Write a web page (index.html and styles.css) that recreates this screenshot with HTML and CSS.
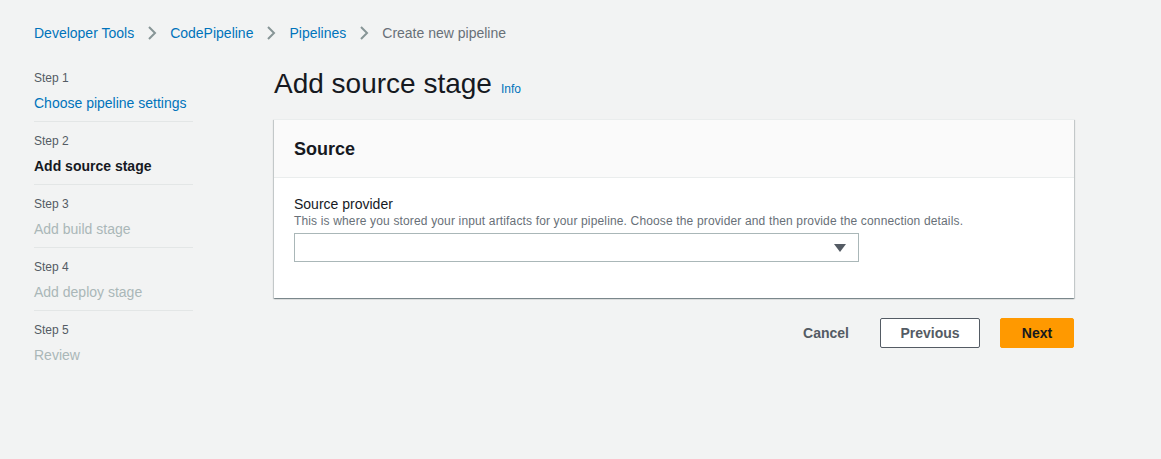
FILE: index.html
```html
<!DOCTYPE html>
<html>
<head>
<meta charset="utf-8">
<link rel="stylesheet" href="styles.css">
</head>
<body>
<nav class="crumbs">
  <a class="crumb-link">Developer Tools</a>
  <svg class="chev" viewBox="0 0 10 16" width="10" height="16"><path d="M2 2l6 6-6 6" fill="none" stroke="#879596" stroke-width="2"/></svg>
  <a class="crumb-link">CodePipeline</a>
  <svg class="chev" viewBox="0 0 10 16" width="10" height="16"><path d="M2 2l6 6-6 6" fill="none" stroke="#879596" stroke-width="2"/></svg>
  <a class="crumb-link">Pipelines</a>
  <svg class="chev" viewBox="0 0 10 16" width="10" height="16"><path d="M2 2l6 6-6 6" fill="none" stroke="#879596" stroke-width="2"/></svg>
  <span class="crumb-current">Create new pipeline</span>
</nav>
<div class="layout">
  <aside class="steps">
    <div class="step"><div class="step-num">Step 1</div><div class="step-title link">Choose pipeline settings</div></div>
    <div class="step"><div class="step-num">Step 2</div><div class="step-title active">Add source stage</div></div>
    <div class="step"><div class="step-num">Step 3</div><div class="step-title disabled">Add build stage</div></div>
    <div class="step"><div class="step-num">Step 4</div><div class="step-title disabled">Add deploy stage</div></div>
    <div class="step last"><div class="step-num">Step 5</div><div class="step-title disabled">Review</div></div>
  </aside>
  <main class="main">
    <div class="title-row">
      <h1 class="title">Add source stage</h1>
      <a class="info">Info</a>
    </div>
    <section class="card">
      <div class="card-head">Source</div>
      <div class="card-body">
        <div class="label">Source provider</div>
        <div class="desc">This is where you stored your input artifacts for your pipeline. Choose the provider and then provide the connection details.</div>
        <div class="select">
          <svg class="caret" viewBox="0 0 12 10" width="12" height="10"><path d="M0 1h12L6 9z" fill="#545b64"/></svg>
        </div>
      </div>
    </section>
    <div class="actions">
      <button class="btn btn-link">Cancel</button>
      <button class="btn btn-normal">Previous</button>
      <button class="btn btn-primary">Next</button>
    </div>
  </main>
</div>
</body>
</html>
```
FILE: styles.css
```css
html, body {
  margin: 0;
  padding: 0;
  background: #f2f3f3;
  font-family: "Liberation Sans", Arial, sans-serif;
  color: #16191f;
}
.crumbs {
  display: flex;
  align-items: center;
  gap: 13px;
  padding: 23px 0 0 34px;
  height: 20px;
  font-size: 14px;
  line-height: 20px;
}
.crumb-link { color: #0073bb; }
.crumb-current { color: #687078; }
.chev { display: block; }
.layout {
  display: flex;
  padding: 27px 0 0 34px;
}
.steps {
  width: 159px;
  flex: none;
}
.step {
  border-bottom: 1px solid #e3e6e6;
  height: 62px;
}
.step:first-child { height: 51px; }
.step.last { border-bottom: none; }
.step-num {
  font-size: 12px;
  line-height: 16px;
  color: #545b64;
}
.step + .step .step-num { padding-top: 11px; }
.step-title {
  font-size: 14px;
  line-height: 20px;
  margin-top: 7px;
}
.step-title.link { color: #0073bb; }
.step-title.active { font-weight: bold; color: #16191f; }
.step-title.disabled { color: #aab7b8; }
.main {
  margin-left: 81px;
  width: 800px;
}
.title-row {
  display: flex;
  align-items: baseline;
  gap: 9px;
  margin-top: -4px;
}
.title {
  margin: 0;
  font-size: 28px;
  font-weight: normal;
  line-height: 36px;
  color: #16191f;
}
.info {
  font-size: 12px;
  color: #0073bb;
}
.card {
  margin-top: 17px;
  background: #fff;
  box-shadow: 0 1px 1px 0 rgba(0,28,36,.3), 1px 1px 1px 0 rgba(0,28,36,.15), -1px 1px 1px 0 rgba(0,28,36,.15);
  border-top: 1px solid #eaeded;
}
.card-head {
  background: #fafafa;
  border-bottom: 1px solid #eaeded;
  height: 58px;
  box-sizing: border-box;
  padding: 17px 20px 0;
  font-size: 18px;
  line-height: 24px;
  font-weight: bold;
}
.card-body {
  padding: 17px 20px 36px;
}
.label {
  font-size: 14px;
  line-height: 18px;
  color: #16191f;
}
.desc {
  font-size: 12px;
  line-height: 16px;
  letter-spacing: 0.15px;
  color: #687078;
}
.select {
  margin-top: 4px;
  width: 565px;
  height: 29px;
  box-sizing: border-box;
  border: 1px solid #aab7b8;
  background: #fff;
  display: flex;
  align-items: center;
  justify-content: flex-end;
  padding-right: 12px;
}
.caret { display: block; }
.actions {
  display: flex;
  justify-content: flex-end;
  align-items: center;
  margin-top: 20px;
  gap: 20px;
}
.btn {
  font-family: inherit;
  font-size: 14px;
  font-weight: bold;
  height: 30px;
  box-sizing: border-box;
  border-radius: 2px;
  cursor: pointer;
}
.btn-link {
  background: none;
  border: none;
  color: #545b64;
  padding: 0 11px;
}
.btn-normal {
  background: #fff;
  border: 1px solid #545b64;
  color: #545b64;
  width: 100px;
}
.btn-primary {
  background: #ff9900;
  border: 1px solid #ff9900;
  color: #16191f;
  width: 74px;
}
```
